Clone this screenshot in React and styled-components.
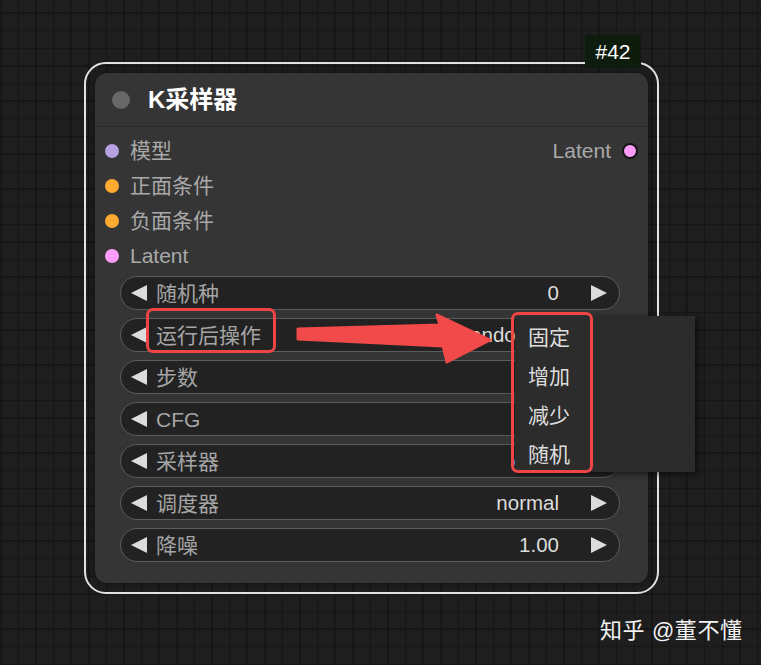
import React from "react";
import styled, { createGlobalStyle } from "styled-components";

const inputs = [
  { name: "模型", color: "#b6a0df" },
  { name: "正面条件", color: "#ffa931" },
  { name: "负面条件", color: "#ffa931" },
  { name: "Latent", color: "#ff9cf9" },
];

const widgets = [
  { name: "随机种", value: "0" },
  { name: "运行后操作", value: "randomize" },
  { name: "步数", value: "20" },
  { name: "CFG", value: "8.0" },
  { name: "采样器", value: "euler" },
  { name: "调度器", value: "normal" },
  { name: "降噪", value: "1.00" },
];

const menuItems = ["固定", "增加", "减少", "随机"];

function Arrow({ dir }) {
  return (
    <svg width="18" height="18" viewBox="0 0 18 18">
      {dir === "left" ? (
        <polygon points="1,9 17,1 17,17" fill="#dcdcdc" />
      ) : (
        <polygon points="17,9 1,1 1,17" fill="#dcdcdc" />
      )}
    </svg>
  );
}

export default function App() {
  return (
    <>
      <GlobalStyle />
      <Canvas>
        <Selection>
          <Badge>#42</Badge>
          <Node>
            <TitleBar>
              <TitleDot />
              <Title>K采样器</Title>
            </TitleBar>
            <Slots>
              {inputs.map((input, i) => (
                <SlotRow key={input.name}>
                  <Slot>
                    <Dot color={input.color} />
                    <SlotLabel>{input.name}</SlotLabel>
                  </Slot>
                  {i === 0 && (
                    <Slot>
                      <SlotLabel>Latent</SlotLabel>
                      <Dot color="#ff9cf9" outlined />
                    </Slot>
                  )}
                </SlotRow>
              ))}
            </Slots>
            <Widgets>
              {widgets.map((w) => (
                <Widget key={w.name}>
                  <Arrow dir="left" />
                  <WidgetLabel>{w.name}</WidgetLabel>
                  <WidgetValue>{w.value}</WidgetValue>
                  <Arrow dir="right" />
                </Widget>
              ))}
            </Widgets>
          </Node>
        </Selection>

        <Annotation>
          <polygon
            points="298,329 440,325 437,315 490,340 447,362 443,346 298,339"
            fill="#f24a4a"
            stroke="#f24a4a"
            strokeWidth="3"
            strokeLinejoin="round"
          />
        </Annotation>

        <Menu>
          {menuItems.map((item) => (
            <MenuItem key={item}>{item}</MenuItem>
          ))}
        </Menu>

        <RedBox style={{ left: 146, top: 308, width: 130, height: 45 }} />
        <RedBox style={{ left: 511, top: 312, width: 82, height: 161 }} />

        <Watermark>知乎 @董不懂</Watermark>
      </Canvas>
    </>
  );
}

const GlobalStyle = createGlobalStyle`
  body {
    margin: 0;
    background: #1e1e1e;
    font-family: "Liberation Sans", "Noto Sans CJK SC", sans-serif;
  }
`;

const Canvas = styled.div`
  position: relative;
  width: 761px;
  height: 665px;
  box-sizing: border-box;
  padding: 62px 0 0 84px;
  overflow: hidden;
  background-color: #1e1e1e;
  background-image:
    repeating-linear-gradient(90deg, #161616 0 1.5px, transparent 1.5px 17.6px),
    repeating-linear-gradient(0deg, #161616 0 1.5px, transparent 1.5px 17.6px);
`;

const Selection = styled.div`
  position: relative;
  width: 575px;
  height: 532px;
  box-sizing: border-box;
  border: 2px solid #e2e2e2;
  border-radius: 22px;
  padding: 9px;
`;

const Badge = styled.div`
  position: absolute;
  left: 499px;
  top: -29px;
  width: 56px;
  height: 33px;
  display: flex;
  align-items: center;
  justify-content: center;
  background: #0e1c0e;
  color: #ffffff;
  font-size: 21px;
`;

const Node = styled.div`
  height: 100%;
  background: #353535;
  border-radius: 12px;
  box-shadow: 0 0 6px rgba(0, 0, 0, 0.5);
`;

const TitleBar = styled.div`
  height: 53px;
  display: flex;
  align-items: center;
  gap: 18px;
  padding-left: 17px;
  border-bottom: 1px solid #2b2b2b;
`;

const TitleDot = styled.div`
  width: 18px;
  height: 18px;
  border-radius: 50%;
  background: #686868;
`;

const Title = styled.div`
  color: #ffffff;
  font-size: 24px;
  font-weight: bold;
  line-height: 1;
`;

const Slots = styled.div`
  padding: 6px 10px 0 10px;
`;

const SlotRow = styled.div`
  height: 35px;
  display: flex;
  align-items: center;
  justify-content: space-between;
`;

const Slot = styled.div`
  display: flex;
  align-items: center;
  gap: 11px;
`;

const Dot = styled.div`
  width: ${({ outlined }) => (outlined ? "16px" : "14px")};
  height: ${({ outlined }) => (outlined ? "16px" : "14px")};
  box-sizing: border-box;
  border-radius: 50%;
  background: ${({ color }) => color};
  border: ${({ outlined }) => (outlined ? "2px solid #151515" : "none")};
`;

const SlotLabel = styled.div`
  color: #a9a9a9;
  font-size: 21px;
  line-height: 1;
`;

const Widgets = styled.div`
  display: flex;
  flex-direction: column;
  gap: 8px;
  margin: 3px 0 0 25px;
`;

const Widget = styled.div`
  width: 500px;
  height: 34px;
  box-sizing: border-box;
  display: flex;
  align-items: center;
  padding: 0 11px 0 9px;
  background: #222222;
  border: 1px solid #5c5c5c;
  border-radius: 17px;
`;

const WidgetLabel = styled.div`
  flex: 1;
  margin-left: 8px;
  color: #a5a5a5;
  font-size: 21px;
  line-height: 1;
`;

const WidgetValue = styled.div`
  margin-right: 31px;
  color: #dddddd;
  font-size: 20.5px;
  line-height: 1;
`;

const Annotation = styled.svg.attrs({ width: 761, height: 665 })`
  position: absolute;
  left: 0;
  top: 0;
  pointer-events: none;
`;

const Menu = styled.div`
  position: absolute;
  left: 515px;
  top: 316px;
  width: 180px;
  height: 156px;
  box-sizing: border-box;
  background: #2c2c2c;
  box-shadow: 2px 2px 6px rgba(0, 0, 0, 0.6);
`;

const MenuItem = styled.div`
  height: 39px;
  display: flex;
  align-items: center;
  padding-left: 13px;
  color: #dddddd;
  font-size: 21px;
`;

const RedBox = styled.div`
  position: absolute;
  box-sizing: border-box;
  border: 3px solid #ee4646;
  border-radius: 7px;
`;

const Watermark = styled.div`
  position: absolute;
  left: 600px;
  top: 618px;
  color: #f2f2f2;
  font-size: 22px;
  letter-spacing: 0.6px;
  line-height: 26px;
  white-space: pre;
`;
